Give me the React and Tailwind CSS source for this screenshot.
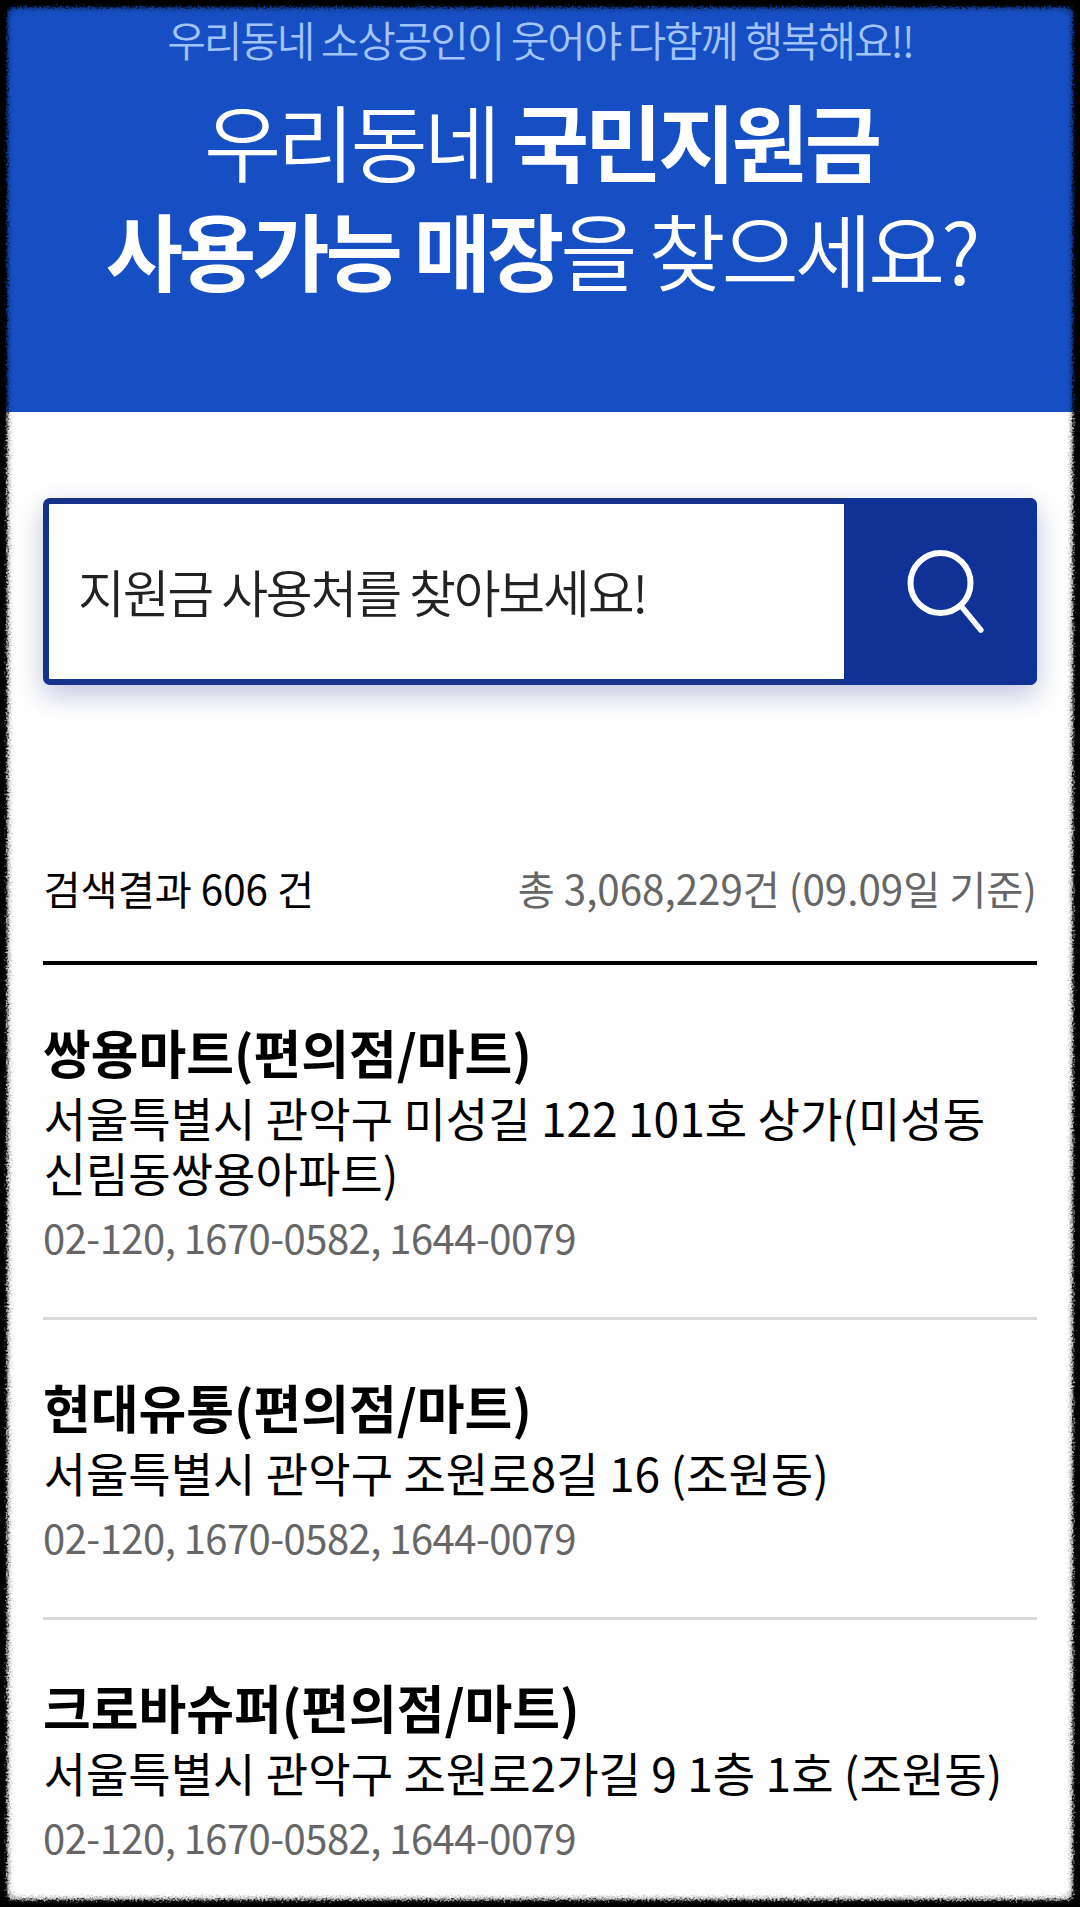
const stores = [
  {
    name: "쌍용마트(편의점/마트)",
    address: "서울특별시 관악구 미성길 122 101호 상가(미성동 신림동쌍용아파트)",
    phone: "02-120, 1670-0582, 1644-0079",
  },
  {
    name: "현대유통(편의점/마트)",
    address: "서울특별시 관악구 조원로8길 16 (조원동)",
    phone: "02-120, 1670-0582, 1644-0079",
  },
  {
    name: "크로바슈퍼(편의점/마트)",
    address: "서울특별시 관악구 조원로2가길 9 1층 1호 (조원동)",
    phone: "02-120, 1670-0582, 1644-0079",
  },
];

function Hero() {
  return (
    <header className="h-[412px] bg-[#154fc3] text-center whitespace-nowrap">
      <p className="pt-[9px] text-[42px] leading-[60px] font-[350] tracking-[-0.05em] text-[#a3c3fb]">
        우리동네 소상공인이 웃어야 다함께 행복해요!!
      </p>
      <h1 className="pt-[16px] pl-[2px] text-[84px] leading-[109px] font-[350] tracking-[-0.048em] text-white">
        우리동네 <b className="font-bold">국민지원금</b>
        <br />
        <b className="font-bold">사용가능 매장</b>을 찾으세요?
      </h1>
    </header>
  );
}

function SearchBox() {
  return (
    <div className="mx-[43px] mt-[86px] flex h-[187px] rounded-[7px] border-[6px] border-[#143389] bg-white shadow-[0_10px_26px_rgba(20,40,130,0.26)]">
      <div className="flex flex-1 items-center pl-[29px] text-[51px] font-[350] tracking-[-0.044em] whitespace-nowrap text-[#222]">
        지원금 사용처를 찾아보세요!
      </div>
      <button aria-label="검색" className="-my-[6px] -mr-[6px] w-[193px] rounded-r-[7px] bg-[#103297]">
        <svg viewBox="0 0 193 187" className="h-full w-full" fill="none" stroke="#fafcff" strokeWidth="6" strokeLinecap="round">
          <circle cx="96.5" cy="85" r="30" />
          <path d="M117.500 108.500L136.800 132" strokeWidth="5.600" />
        </svg>
      </button>
    </div>
  );
}

function Store({ store }) {
  return (
    <li className="border-b-[3px] border-[#d9d9d9] pt-[56px] pb-[55px] last:border-b-0">
      <h2 className="text-[51.9px] leading-[62px] font-bold">{store.name}</h2>
      <p className="mt-[7px] pl-[0.5px] text-[46.1px] leading-[55px] break-keep">{store.address}</p>
      <p className="mt-[12px] text-[40px] leading-[50px] tracking-[-0.54px] text-[#666]">{store.phone}</p>
    </li>
  );
}

/* Torn-paper edge drawn over the page */
function RoughFrame() {
  return (
    <svg className="pointer-events-none absolute inset-0" width="1080" height="1907" viewBox="0 0 1080 1907">
      <defs>
        <filter id="rough" filterUnits="userSpaceOnUse" x="-20" y="-20" width="1120" height="1947" colorInterpolationFilters="sRGB">
          <feGaussianBlur in="SourceGraphic" stdDeviation="0.8" result="b" />
          <feTurbulence type="fractalNoise" baseFrequency="0.5" numOctaves="3" seed="4" result="n" />
          <feDisplacementMap in="b" in2="n" scale="8" xChannelSelector="R" yChannelSelector="G" />
        </filter>
        <filter id="soft" filterUnits="userSpaceOnUse" x="-20" y="-20" width="1120" height="1947" colorInterpolationFilters="sRGB">
          <feGaussianBlur in="SourceGraphic" stdDeviation="1.5" result="b" />
          <feTurbulence type="fractalNoise" baseFrequency="0.6" numOctaves="2" seed="9" result="n" />
          <feDisplacementMap in="b" in2="n" scale="9" xChannelSelector="R" yChannelSelector="G" />
        </filter>
      </defs>
      <path filter="url(#soft)" fillRule="evenodd" fillOpacity="0.25" d="M-30-30H1110V1937H-30ZM20 10Q10 10 10 20V1887Q10 1897 20 1897H1060Q1070 1897 1070 1887V20Q1070 10 1060 10Z" />
      <path filter="url(#rough)" fillRule="evenodd" d="M-30-30H1110V1937H-30ZM15 7Q7 7 7 15V1892Q7 1900 15 1900H1065Q1073 1900 1073 1892V15Q1073 7 1065 7Z" />
    </svg>
  );
}

export default function App() {
  return (
    <div className="relative h-[1907px] w-[1080px] overflow-hidden bg-[#fefefe] font-['Noto_Sans_CJK_KR',sans-serif] text-black">
      <Hero />
      <main>
        <SearchBox />
        <section className="mx-[43px] mt-[161px]">
          <div className="flex h-[119px] justify-between border-b-4 border-black pt-[14px] pl-[0.5px] text-[40.3px] leading-[56px] whitespace-nowrap">
            <p>검색결과 606 건</p>
            <p className="text-[#666]">총 3,068,229건 (09.09일 기준)</p>
          </div>
          <ul>
            {stores.map((s) => (
              <Store key={s.name} store={s} />
            ))}
          </ul>
        </section>
      </main>
      <RoughFrame />
    </div>
  );
}
